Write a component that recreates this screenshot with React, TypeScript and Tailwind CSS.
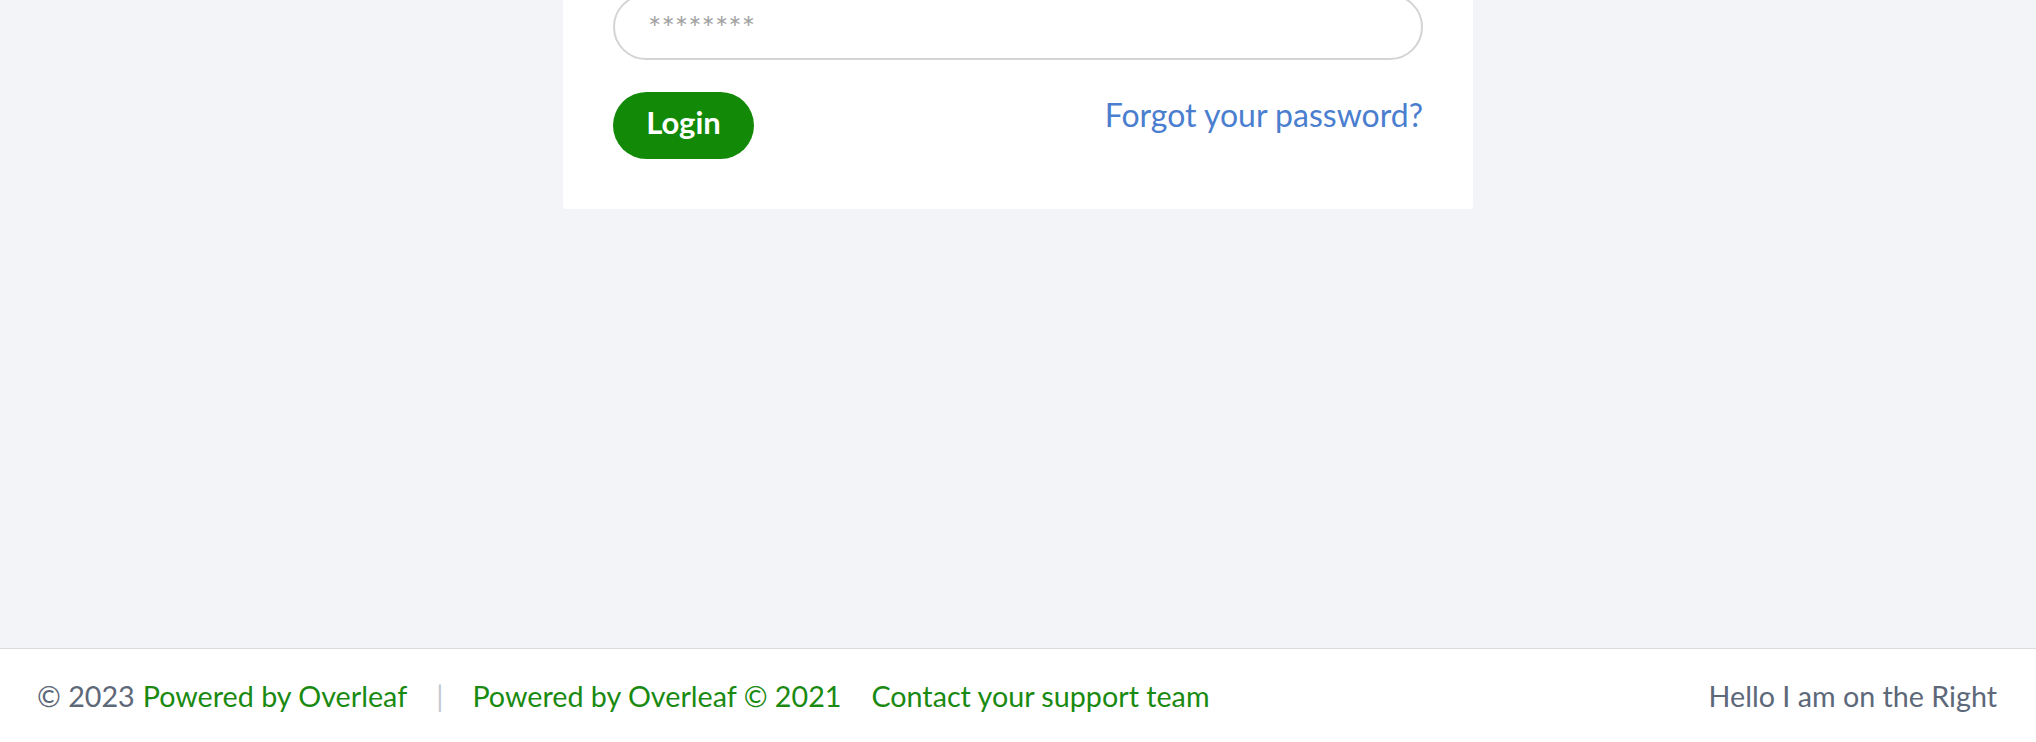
export default function App() {
  return (
    <div className="flex h-[742px] w-full flex-col overflow-hidden bg-[#f3f4f8] font-['Lato','Liberation_Sans',sans-serif]">
      {/* Login card, its top scrolled off */}
      <main className="flex h-[648px] shrink-0 justify-center overflow-hidden">
        <div className="h-[209px] w-[910px] rounded-b-[4px] bg-white px-[50px]">
          <input
            type="password"
            placeholder="********"
            className="-mt-[6px] block h-[66px] w-full rounded-full border-2 border-[#d4d4d4] bg-white px-[33px] text-[31.5px] text-[#333] outline-none placeholder:text-[#a3a3a3]"
          />
          <div className="mt-[32px] flex items-start justify-between">
            <button className="h-[67px] w-[141px] rounded-full bg-[#138a07] pb-[7px] text-[31px] font-bold leading-[36px] text-white">
              Login
            </button>
            <a href="#" className="text-[32px] leading-[45px] text-[#4a7ecf]">
              Forgot your password?
            </a>
          </div>
        </div>
      </main>

      <footer className="flex h-[94px] shrink-0 items-center justify-between border-t border-[#dcdcdc] bg-white pl-[37px] pr-[39px] pt-[2px] text-[28.7px] leading-[45px]">
        <div className="flex items-center">
          <span className="text-[#5d6879]">© 2023</span>
          <a href="#" className="ml-[8px] text-[#1a8a12]">Powered by Overleaf</a>
          <span className="mx-[29px] text-[#c2c8d2]">|</span>
          <a href="#" className="text-[#1a8a12]">Powered by Overleaf © 2021</a>
          <a href="#" className="ml-[30px] text-[#1a8a12]">Contact your support team</a>
        </div>
        <span className="text-[#5d6879]">Hello I am on the Right</span>
      </footer>
    </div>
  )
}
